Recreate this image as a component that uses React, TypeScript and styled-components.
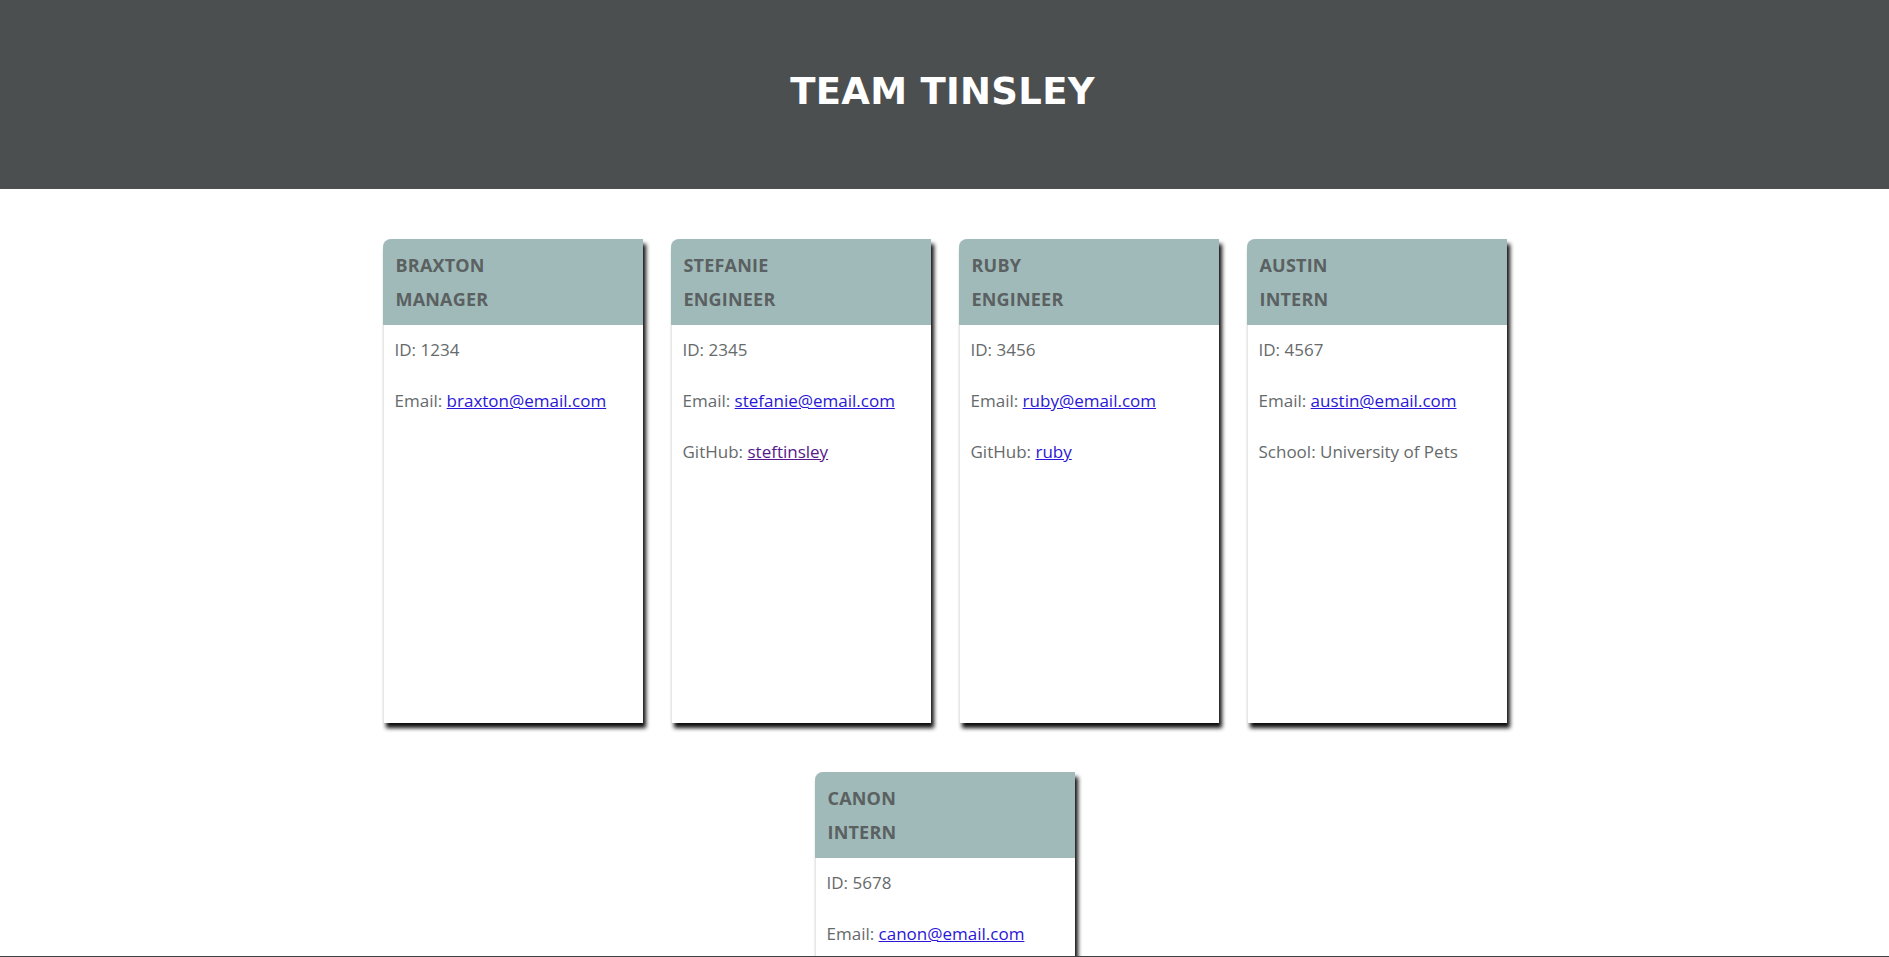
import React from "react";
import styled, { createGlobalStyle } from "styled-components";

const GlobalStyle = createGlobalStyle`
  html, body {
    margin: 0;
    padding: 0;
    background: #ffffff;
    font-family: "Open Sans", "Noto Sans", Arial, sans-serif;
  }
  * { box-sizing: border-box; }
`;

const Page = styled.div`
  min-height: 957px;
  display: flex;
  flex-direction: column;
`;

const Banner = styled.header`
  height: 189px;
  background: #4b4f50;
  display: flex;
  justify-content: center;
  align-items: flex-start;
  padding-top: 66px;
`;

const Title = styled.h1`
  margin: 0 0 0 -4px;
  color: #ffffff;
  font-family: "DejaVu Sans", "Open Sans", sans-serif;
  font-weight: 700;
  font-size: 37px;
  line-height: 52px;
  letter-spacing: 0.3px;
`;

const Grid = styled.main`
  margin: 50px auto 0;
  width: 1124px;
  display: flex;
  flex-wrap: wrap;
  justify-content: center;
  gap: 49px 28px;
  padding-bottom: 40px;
`;

const Card = styled.section`
  width: 260px;
  height: 484px;
  background: #ffffff;
  border-top-left-radius: 8px;
  border-left: 1px solid #e6e6e6;
  box-shadow: 3px 5px 4px rgba(0, 0, 0, 0.95);
  display: flex;
  flex-direction: column;
`;

const CardHead = styled.div`
  height: 86px;
  background: #9fbab9;
  border-top-left-radius: 8px;
  padding: 9px 13px 0;
  margin-left: -1px;
`;

const HeadLine = styled.div`
  font-family: "Open Sans", sans-serif;
  font-weight: 700;
  font-size: 18px;
  line-height: 34px;
  color: #5b6061;
  letter-spacing: 0.2px;
`;

const CardBody = styled.div`
  padding: 12px 11px 0;
  display: flex;
  flex-direction: column;
  gap: 25px;
`;

const Row = styled.div`
  font-family: "Open Sans", sans-serif;
  font-size: 17px;
  line-height: 26px;
  color: #666a6b;
`;

const Link = styled.a<{ $visited?: boolean }>`
  color: ${(p) => (p.$visited ? "#55198b" : "#2a16d6")};
  text-decoration: underline;
`;

const BottomEdge = styled.div`
  position: fixed;
  left: 0;
  right: 0;
  bottom: 0;
  height: 1px;
  background: #3c4041;
`;

type Member = {
  name: string;
  role: string;
  id: string;
  email: string;
  github?: string;
  visited?: boolean;
  school?: string;
};

const members: Member[] = [
  { name: "BRAXTON", role: "MANAGER", id: "1234", email: "braxton@email.com" },
  { name: "STEFANIE", role: "ENGINEER", id: "2345", email: "stefanie@email.com", github: "steftinsley", visited: true },
  { name: "RUBY", role: "ENGINEER", id: "3456", email: "ruby@email.com", github: "ruby" },
  { name: "AUSTIN", role: "INTERN", id: "4567", email: "austin@email.com", school: "University of Pets" },
  { name: "CANON", role: "INTERN", id: "5678", email: "canon@email.com", school: "University of Pets" },
];

export default function App() {
  return (
    <Page>
      <GlobalStyle />
      <Banner>
        <Title>TEAM TINSLEY</Title>
      </Banner>
      <Grid>
        {members.map((m) => (
          <Card key={m.id}>
            <CardHead>
              <HeadLine>{m.name}</HeadLine>
              <HeadLine>{m.role}</HeadLine>
            </CardHead>
            <CardBody>
              <Row>ID: {m.id}</Row>
              <Row>
                Email: <Link href={`mailto:${m.email}`}>{m.email}</Link>
              </Row>
              {m.github && (
                <Row>
                  GitHub: <Link $visited={m.visited} href={`#${m.github}`}>{m.github}</Link>
                </Row>
              )}
              {m.school && <Row>School: {m.school}</Row>}
            </CardBody>
          </Card>
        ))}
      </Grid>
      <BottomEdge />
    </Page>
  );
}
